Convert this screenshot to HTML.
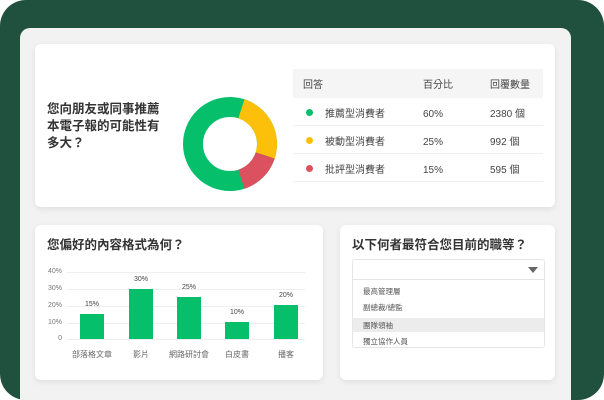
<!DOCTYPE html>
<html><head><meta charset="utf-8"><style>
*{margin:0;padding:0;box-sizing:border-box}
html,body{width:604px;height:400px;overflow:hidden}
body{background:#fff;position:relative;font-family:"Liberation Sans","Noto Sans CJK TC",sans-serif;color:#333}
.bg{position:absolute;left:0;top:0;width:604px;height:400px;background:#20503e;border-radius:26px}
.panel{position:absolute;left:20px;top:28px;width:551px;height:372px;background:#f1f2f1;border-radius:10px 10px 0 0}
.card{position:absolute;background:#fff;border-radius:6px;box-shadow:0 2px 6px rgba(0,0,0,.08)}
.abs{position:absolute;white-space:nowrap}
.t{font-weight:bold;font-size:12.5px;color:#333}
.s{font-size:10px;color:#444;line-height:12px;height:12px}
.dot{position:absolute;width:7px;height:7px;border-radius:50%}
.ln{position:absolute;height:1px;background:#eee}
.y{font-size:7px;color:#777;position:absolute;right:0}
.bar{position:absolute;width:24px;background:#06bf6b}
.v{font-size:7px;color:#444;position:absolute;width:40px;text-align:center}
.x{font-size:8px;color:#666;position:absolute;width:60px;text-align:center}
.it{font-size:7.5px;color:#555;position:absolute;left:10px}
</style></head><body>
<div class="bg"></div>
<div class="panel"></div>
<div class="card" style="left:35px;top:44px;width:520px;height:163px">
 <div class="abs t" style="left:12px;top:57px;line-height:17px">您向朋友或同事推薦<br>本電子報的可能性有<br>多大？</div>
 <svg class="abs" style="left:148px;top:53px" width="94" height="94" viewBox="0 0 94 94">
  <circle cx="47" cy="47" r="37" fill="none" stroke="#06bf6b" stroke-width="20"/>
  <circle cx="47" cy="47" r="37" fill="none" stroke="#fcc00a" stroke-width="20" stroke-dasharray="58.1 174.4" transform="rotate(-72 47 47)"/>
  <circle cx="47" cy="47" r="37" fill="none" stroke="#dc5160" stroke-width="20" stroke-dasharray="34.9 197.6" transform="rotate(18 47 47)"/>
 </svg>
 <div class="abs" style="left:258px;top:25px;width:250px;height:29px;background:#f5f5f5"></div>
 <div class="abs s" style="left:268px;top:36px">回答</div>
 <div class="abs s" style="left:388px;top:36px">百分比</div>
 <div class="abs s" style="left:455px;top:36px">回覆數量</div>
 <div class="dot" style="left:271px;top:65px;background:#06bf6b"></div>
 <div class="abs s" style="left:290px;top:65px">推薦型消費者</div><div class="abs s" style="left:388px;top:65px">60%</div><div class="abs s" style="left:455px;top:65px">2380 個</div>
 <div class="ln" style="left:258px;top:81px;width:250px"></div>
 <div class="dot" style="left:271px;top:93px;background:#fcc00a"></div>
 <div class="abs s" style="left:290px;top:93px">被動型消費者</div><div class="abs s" style="left:388px;top:93px">25%</div><div class="abs s" style="left:455px;top:93px">992 個</div>
 <div class="ln" style="left:258px;top:109px;width:250px"></div>
 <div class="dot" style="left:271px;top:121px;background:#dc5160"></div>
 <div class="abs s" style="left:290px;top:121px">批評型消費者</div><div class="abs s" style="left:388px;top:121px">15%</div><div class="abs s" style="left:455px;top:121px">595 個</div>
 <div class="ln" style="left:258px;top:137px;width:250px"></div>
</div>
<div class="card" style="left:35px;top:225px;width:288px;height:155px">
 <div class="abs t" style="left:12px;top:9px">您偏好的內容格式為何？</div>
 <div class="abs" style="left:0;top:0;width:27px">
  <div class="y" style="top:43px">40%</div><div class="y" style="top:60px">30%</div><div class="y" style="top:77px">20%</div><div class="y" style="top:94px">10%</div><div class="y" style="top:110px">0</div>
 </div>
 <div class="ln" style="left:32px;top:47px;width:238px"></div><div class="ln" style="left:32px;top:64px;width:238px"></div><div class="ln" style="left:32px;top:81px;width:238px"></div><div class="ln" style="left:32px;top:98px;width:238px"></div><div class="ln" style="left:32px;top:114px;width:238px"></div>
 <div class="bar" style="left:45px;top:89px;height:25px"></div><div class="v" style="left:37px;top:76px">15%</div>
 <div class="bar" style="left:94px;top:64px;height:50px"></div><div class="v" style="left:86px;top:51px">30%</div>
 <div class="bar" style="left:142px;top:72px;height:42px"></div><div class="v" style="left:134px;top:59px">25%</div>
 <div class="bar" style="left:190px;top:97px;height:17px"></div><div class="v" style="left:182px;top:84px">10%</div>
 <div class="bar" style="left:239px;top:80px;height:34px"></div><div class="v" style="left:231px;top:67px">20%</div>
 <div class="x" style="left:27px;top:124px">部落格文章</div><div class="x" style="left:76px;top:124px">影片</div><div class="x" style="left:124px;top:124px">網路研討會</div><div class="x" style="left:172px;top:124px">白皮書</div><div class="x" style="left:221px;top:124px">播客</div>
</div>
<div class="card" style="left:340px;top:225px;width:215px;height:155px">
 <div class="abs t" style="left:12px;top:9px">以下何者最符合您目前的職等？</div>
 <div class="abs" style="left:12px;top:34px;width:193px;height:89px;border:1px solid #e6e6e6;border-radius:3px">
  <div style="position:absolute;left:0;top:19px;width:191px;height:1px;background:#e6e6e6"></div>
  <div style="position:absolute;right:6px;top:7px;width:0;height:0;border-left:5px solid transparent;border-right:5px solid transparent;border-top:6px solid #666"></div>
  <div style="position:absolute;left:0;top:58px;width:191px;height:14px;background:#ececec"></div>
  <div class="it" style="top:26px">最高管理層</div><div class="it" style="top:42px">副總裁/總監</div><div class="it" style="top:60px">團隊領袖</div><div class="it" style="top:76px">獨立協作人員</div>
 </div>
</div>
</body></html>
